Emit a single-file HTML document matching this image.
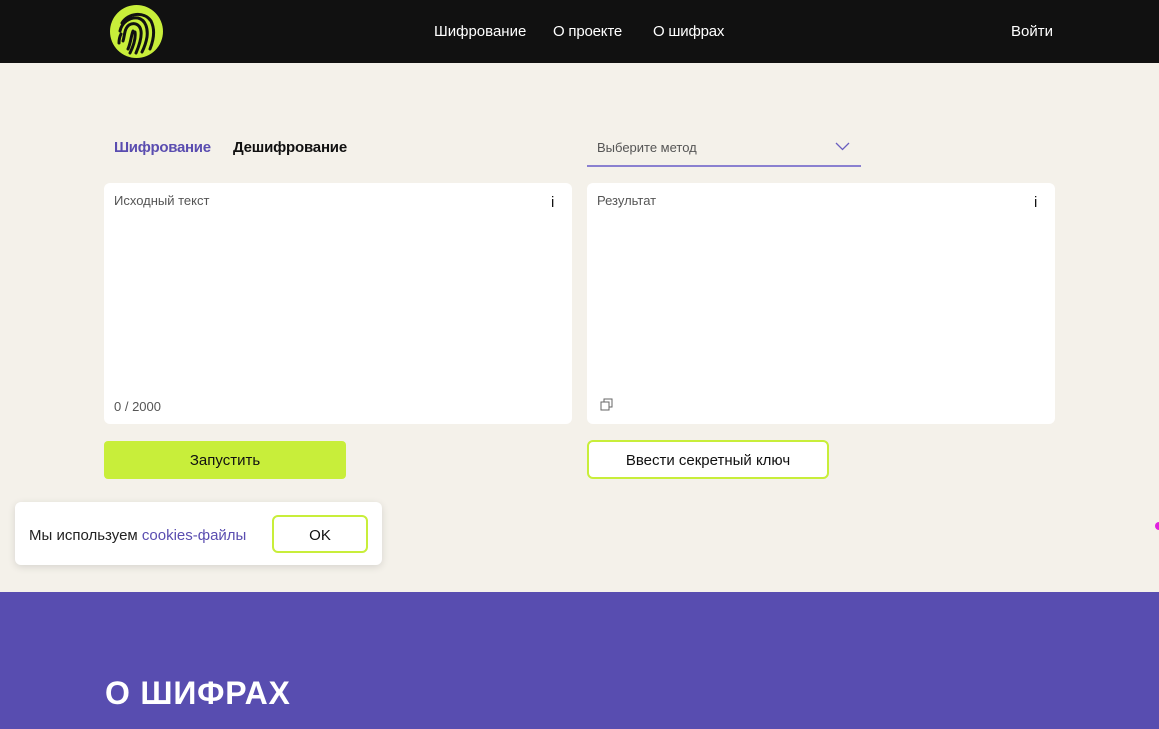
<!DOCTYPE html>
<html><head><meta charset="utf-8"><style>
*{margin:0;padding:0;box-sizing:border-box}
body{width:1159px;height:729px;overflow:hidden;background:#f4f1ea;font-family:"Liberation Sans","DejaVu Sans",sans-serif;position:relative}
.hdr{position:absolute;left:0;top:0;width:1159px;height:63px;background:#111;}
.nav{position:absolute;top:23px;color:#fff;font-size:15px}
.abs{position:absolute}
.box{position:absolute;background:#fff;border-radius:6px}
.lbl{position:absolute;font-size:13px;color:#555}
</style></head><body>
<div class="hdr">
<svg class="abs" style="left:110px;top:5px" width="53" height="53" viewBox="0 0 53 53">
<circle cx="26.5" cy="26.5" r="26.5" fill="#c8ee3a"/>
<g fill="none" stroke="#111" stroke-width="3" stroke-linecap="round">
<path d="M12 18 C18 8 34 6 41 16 C45 24 44 34 40 44"/>
<path d="M10 26 C12 17 20 12 28 13 C36 15 38 24 37 32 C36 38 34 43 32 47"/>
<path d="M13 36 C15 30 14 24 19 20 C24 17 30 19 31 26 C32 33 29 41 26 48"/>
<path d="M18 44 C21 37 21 31 23 26 M25 27 C26 34 23 42 20 48"/>
<path d="M9 38 C9 34 10 31 11 29"/>
</g></svg>
<div class="nav" style="left:434px">Шифрование</div>
<div class="nav" style="left:553px;letter-spacing:-0.2px">О проекте</div>
<div class="nav" style="left:653px;letter-spacing:-0.2px">О шифрах</div>
<div class="nav" style="left:1011px">Войти</div>
</div>
<div class="abs" style="left:114px;top:139px;font-size:15px;font-weight:bold;color:#5a4db0;letter-spacing:-0.3px">Шифрование</div>
<div class="abs" style="left:233px;top:139px;font-size:15px;font-weight:bold;color:#111;letter-spacing:-0.2px">Дешифрование</div>
<div class="abs" style="left:597px;top:140px;font-size:13px;color:#555">Выберите метод</div>
<svg class="abs" style="left:835px;top:142px" width="15" height="9" viewBox="0 0 15 9"><path d="M1 1 L7.5 7.5 L14 1" fill="none" stroke="#6a5fc0" stroke-width="1.3"/></svg>
<div class="abs" style="left:587px;top:165px;width:274px;height:1.5px;background:#8a80d0"></div>
<div class="box" style="left:104px;top:183px;width:468px;height:241px"></div>
<div class="box" style="left:587px;top:183px;width:468px;height:241px"></div>
<div class="lbl" style="left:114px;top:193px">Исходный текст</div>
<div class="lbl" style="left:597px;top:193px">Результат</div>
<div class="abs" style="left:551px;top:194px;font-size:15px;color:#111">i</div>
<div class="abs" style="left:1034px;top:194px;font-size:15px;color:#111">i</div>
<div class="lbl" style="left:114px;top:399px">0 / 2000</div>
<svg class="abs" style="left:600px;top:398px" width="14" height="14" viewBox="0 0 14 14"><rect x="1" y="4" width="8" height="8" fill="none" stroke="#666"/><path d="M4 4V1h8v8H9" fill="none" stroke="#666"/></svg>
<div class="abs" style="left:104px;top:441px;width:242px;height:38px;background:#c8ee3a;border-radius:4px;text-align:center;line-height:40px;font-size:15px;color:#111">Запустить</div>
<div class="abs" style="left:587px;top:440px;width:242px;height:39px;border:2px solid #c8ee3a;background:#fff;border-radius:6px;text-align:center;line-height:38px;font-size:15px;color:#111">Ввести секретный ключ</div>
<div class="abs" style="left:15px;top:502px;width:367px;height:63px;background:#fff;border-radius:6px;box-shadow:0 2px 8px rgba(0,0,0,.12)"></div>
<div class="abs" style="left:29px;top:527px;font-size:15px;color:#222">Мы используем <span style="color:#5a4db0">cookies-файлы</span></div>
<div class="abs" style="left:272px;top:515px;width:96px;height:38px;border:2px solid #c8ee3a;border-radius:6px;text-align:center;line-height:37px;font-size:15px;color:#111">OK</div>
<div class="abs" style="left:1155px;top:522px;width:8px;height:8px;border-radius:50%;background:#e020e0"></div>
<div class="abs" style="left:0;top:592px;width:1159px;height:137px;background:#584db0"></div>
<div class="abs" style="left:105px;top:675px;font-size:32px;font-weight:bold;color:#fff;letter-spacing:0.8px">О ШИФРАХ</div>
</body></html>
